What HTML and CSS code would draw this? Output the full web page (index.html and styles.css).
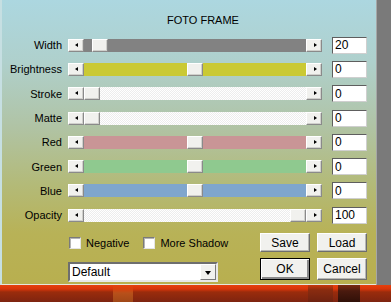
FILE: index.html
```html
<!DOCTYPE html>
<html lang="en">

<head>
    <meta charset="UTF-8">
    <meta name="viewport" content="width=device-width, initial-scale=1.0">
    <title>Foto Frame</title>
    <link rel="stylesheet" href="styles.css">
</head>

<body>
    <div class="screen">
        <div class="dialog">
            <h1 class="title">FOTO FRAME</h1>

            <div class="sliders">
                <div class="slider">
                    <label>Width</label>
                    <div class="scroll">
                        <span class="btn left"></span>
                        <div class="track gray"><span style="width: 8px;"></span><span class="thumb"></span></div>
                        <span class="btn right"></span>
                    </div>
                    <input type="text" value="20">
                </div>
                <div class="slider">
                    <label>Brightness</label>
                    <div class="scroll">
                        <span class="btn left"></span>
                        <div class="track yellow"><span style="width: 103px;"></span><span class="thumb"></span></div>
                        <span class="btn right"></span>
                    </div>
                    <input type="text" value="0">
                </div>
                <div class="slider">
                    <label>Stroke</label>
                    <div class="scroll">
                        <span class="btn left"></span>
                        <div class="track white"><span style="width: 0px;"></span><span class="thumb"></span></div>
                        <span class="btn right"></span>
                    </div>
                    <input type="text" value="0">
                </div>
                <div class="slider">
                    <label>Matte</label>
                    <div class="scroll">
                        <span class="btn left"></span>
                        <div class="track white"><span style="width: 0px;"></span><span class="thumb"></span></div>
                        <span class="btn right"></span>
                    </div>
                    <input type="text" value="0">
                </div>
                <div class="slider">
                    <label>Red</label>
                    <div class="scroll">
                        <span class="btn left"></span>
                        <div class="track red"><span style="width: 103px;"></span><span class="thumb"></span></div>
                        <span class="btn right"></span>
                    </div>
                    <input type="text" value="0">
                </div>
                <div class="slider">
                    <label>Green</label>
                    <div class="scroll">
                        <span class="btn left"></span>
                        <div class="track green"><span style="width: 103px;"></span><span class="thumb"></span></div>
                        <span class="btn right"></span>
                    </div>
                    <input type="text" value="0">
                </div>
                <div class="slider">
                    <label>Blue</label>
                    <div class="scroll">
                        <span class="btn left"></span>
                        <div class="track blue"><span style="width: 103px;"></span><span class="thumb"></span></div>
                        <span class="btn right"></span>
                    </div>
                    <input type="text" value="0">
                </div>
                <div class="slider">
                    <label>Opacity</label>
                    <div class="scroll">
                        <span class="btn left"></span>
                        <div class="track white"><span style="width: 206px;"></span><span class="thumb"></span></div>
                        <span class="btn right"></span>
                    </div>
                    <input type="text" value="100">
                </div>
            </div>

            <div class="footer">
                <div class="options">
                    <label class="check"><span class="box"></span>Negative</label>
                    <label class="check"><span class="box"></span>More Shadow</label>
                </div>
                <div class="buttons">
                    <button class="push">Save</button>
                    <button class="push">Load</button>
                </div>
                <div class="preset">
                    <span class="value">Default</span>
                    <span class="drop"></span>
                </div>
                <div class="buttons">
                    <button class="push default">OK</button>
                    <button class="push">Cancel</button>
                </div>
            </div>
        </div>
        <div class="side"></div>
    </div>

    <div class="desk">
        <span class="seg s1"></span>
        <span class="seg s2"></span>
        <span class="seg s3"></span>
        <span class="seg s4"></span>
        <span class="seg s5"></span>
        <span class="seg s6"></span>
        <span class="seg s7"></span>
        <span class="seg s8"></span>
    </div>
</body>

</html>
```

FILE: styles.css
```css
body {
    margin: 0;
    width: 391px;
    height: 302px;
    overflow: hidden;
    font-family: "Liberation Sans", Arial, sans-serif;
    font-size: 11px;
    color: #000;
    background-color: #7c7c7c;
}

.screen {
    display: flex;
    height: 285px;
}

.dialog {
    width: 376px;
    box-sizing: border-box;
    border-left: 2px solid #c6dfe2;
    border-bottom: 1px solid #e6e6dc;
    background: linear-gradient(to bottom, #acd7e0 0%, #afd0cc 22%, #b0c3a4 45%, #b3ba78 65%, #b8b257 82%, #b8af4f 100%);
}

.side {
    flex: 1;
    border-left: 1px solid #a6a6a6;
    background-color: #7a7a7a;
}

.title {
    margin: 0;
    padding-top: 14px;
    padding-left: 165px;
    height: 13px;
    line-height: 13px;
    font-size: 11px;
    font-weight: normal;
}

.sliders {
    margin-top: 6px;
    display: grid;
    grid-auto-rows: 24.3px;
}

.slider {
    display: flex;
    align-items: center;
}

.slider label {
    width: 60px;
    margin-right: 6px;
    text-align: right;
}

.scroll {
    display: flex;
    width: 254px;
    height: 13px;
}

.btn,
.thumb {
    position: relative;
    flex: none;
    width: 16px;
    height: 13px;
    box-sizing: border-box;
    background-color: #f1f1ee;
    border-top: 1px solid #fff;
    border-left: 1px solid #fff;
    border-right: 1px solid #8a8a8a;
    border-bottom: 1px solid #8a8a8a;
    box-shadow: inset -1px -1px 0 #d0d0cc;
}

.btn::after {
    content: "";
    position: absolute;
    top: 3px;
    left: 6px;
    border-top: 2.5px solid transparent;
    border-bottom: 2.5px solid transparent;
}

.btn.left::after {
    border-right: 3px solid #000;
}

.btn.right::after {
    left: 7px;
    border-left: 3px solid #000;
}

.track {
    flex: 1;
    display: flex;
}

.track span {
    flex: none;
}

.track.gray {
    background-color: #828282;
}

.track.yellow {
    background-color: #cac934;
}

.track.white {
    background-color: #fafafa;
    background-image: repeating-conic-gradient(#ffffff 0 25%, #ededed 0 50%);
    background-size: 2px 2px;
}

.track.red {
    background-color: #c99596;
}

.track.green {
    background-color: #8fc98f;
}

.track.blue {
    background-color: #7fa6cd;
}

.slider input {
    width: 35px;
    height: 17px;
    margin: 0 0 0 10px;
    padding: 0 2px;
    box-sizing: border-box;
    border: 1px solid;
    border-color: #5e5e5e #cfcfcf #cfcfcf #5e5e5e;
    font-family: "Liberation Sans", Arial, sans-serif;
    font-size: 12px;
    background-color: #fff;
    outline: none;
}

.footer {
    display: grid;
    grid-template-columns: 192px 107px;
    grid-template-rows: 19px 22px;
    row-gap: 6px;
    margin-top: 6px;
    padding-left: 66px;
}

.options {
    display: flex;
    align-items: center;
    gap: 14px;
    padding-left: 1px;
}

.check {
    display: flex;
    align-items: center;
    gap: 5px;
}

.box {
    width: 12px;
    height: 12px;
    box-sizing: border-box;
    background-color: #fff;
    border: 1px solid;
    border-color: #7a7a7a #e4e4e4 #e4e4e4 #7a7a7a;
    box-shadow: inset 1px 1px 0 #b4b4b4;
}

.buttons {
    display: flex;
    gap: 7px;
}

.push {
    width: 50px;
    height: 19px;
    padding: 0;
    box-sizing: border-box;
    font-family: "Liberation Sans", Arial, sans-serif;
    font-size: 12px;
    color: #000;
    background-color: #f1f1ee;
    border: 1px solid;
    border-color: #fff #6e6e6e #6e6e6e #fff;
    box-shadow: inset -1px -1px 0 #b8b8b4;
}

.buttons:last-child .push {
    height: 22px;
}

.push.default {
    border: 1px solid #000;
    box-shadow: inset 1px 1px 0 #fff, inset -2px -2px 0 #8a8a8a;
}

.preset {
    display: flex;
    width: 150px;
    height: 20px;
    margin-top: 4px;
    box-sizing: border-box;
    border: 2px solid;
    border-color: #6e6e6e #e8e8e8 #e8e8e8 #6e6e6e;
    background-color: #fff;
}

.preset .value {
    flex: 1;
    padding-left: 2px;
    line-height: 16px;
    font-size: 12px;
}

.drop {
    position: relative;
    width: 16px;
    box-sizing: border-box;
    background-color: #f1f1ee;
    border: 1px solid;
    border-color: #fff #7a7a7a #7a7a7a #fff;
}

.drop::after {
    content: "";
    position: absolute;
    top: 6px;
    left: 4px;
    border-left: 3.5px solid transparent;
    border-right: 3.5px solid transparent;
    border-top: 4px solid #000;
}

.desk {
    display: flex;
    height: 17px;
}

.seg {
    background: linear-gradient(to bottom, #e6400e 0, #d8350a 4px, #9a2c0c 7px, #7e2410 17px);
}

.s1 { width: 113px; }
.s2 { width: 20px; background: linear-gradient(to bottom, #e6400e 0, #d8400c 4px, #b8501a 8px, #a04818 17px); }
.s3 { width: 175px; }
.s4 { width: 25px; background: linear-gradient(to bottom, #c8380c 0, #8a2c10 5px, #6e2210 17px); }
.s5 { width: 5px; }
.s6 { width: 22px; background: linear-gradient(to bottom, #7a2810 0, #4a1a0e 6px, #301008 17px); }
.s7 { width: 8px; background-color: #d8e4ee; }
.s8 { flex: 1; background-color: #7a7a7a; }
```
